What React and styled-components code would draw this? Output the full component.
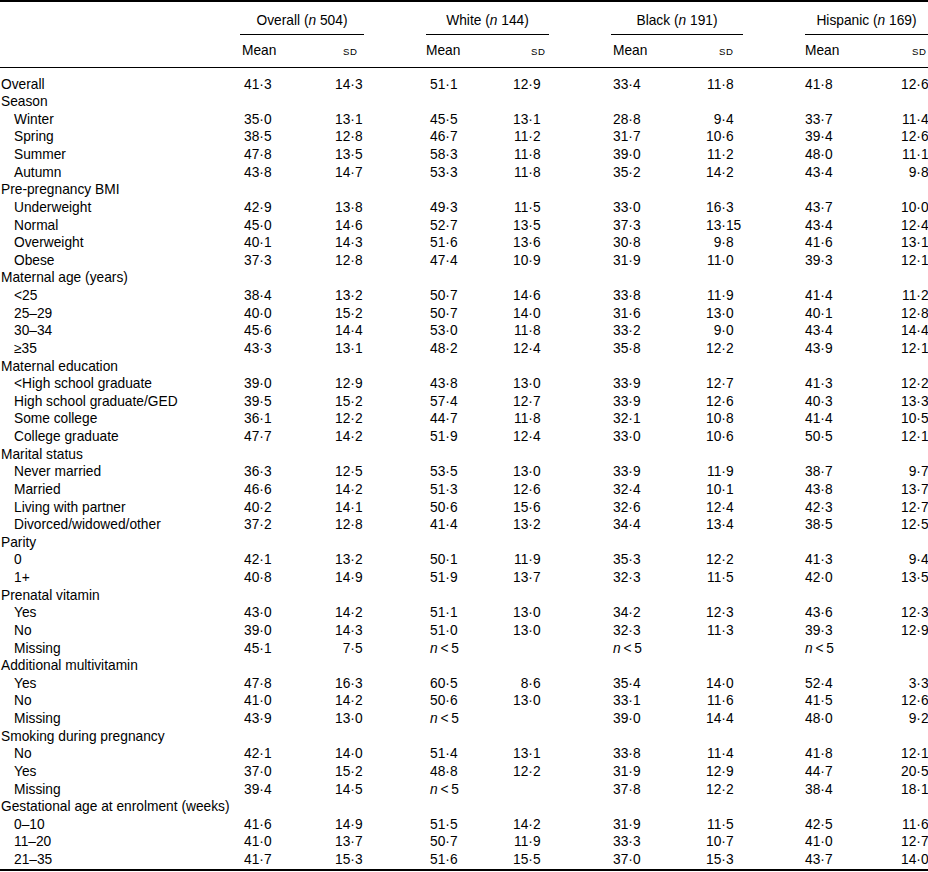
import React from "react";
import styled, { createGlobalStyle } from "styled-components";

const COLUMNS = "240px 60px 64px 62px 60px 63px 62px 60px 72px 62px 60px 63px";
const ROW_H = 17.64;

const groups = [
  { title: "Overall", n: 504, meanHead: 2, meanPad: 4, sdPad: 35, sdHead: 43 },
  { title: "White", n: 144, meanHead: 0, meanPad: 4, sdPad: 27, sdHead: 45 },
  { title: "Black", n: 191, meanHead: 2, meanPad: 2, sdPad: 35, sdHead: 48 },
  { title: "Hispanic", n: 169, meanHead: 0, meanPad: 0, sdPad: 36, sdHead: 47 }
];

// "x" = n < 5, null = empty cell
const sections = [
  { label: "Overall", values: ["41.3", "14.3", "51.1", "12.9", "33.4", "11.8", "41.8", "12.6"] },
  {
    label: "Season",
    rows: [
      ["Winter", "35.0", "13.1", "45.5", "13.1", "28.8", "9.4", "33.7", "11.4"],
      ["Spring", "38.5", "12.8", "46.7", "11.2", "31.7", "10.6", "39.4", "12.6"],
      ["Summer", "47.8", "13.5", "58.3", "11.8", "39.0", "11.2", "48.0", "11.1"],
      ["Autumn", "43.8", "14.7", "53.3", "11.8", "35.2", "14.2", "43.4", "9.8"]
    ]
  },
  {
    label: "Pre-pregnancy BMI",
    rows: [
      ["Underweight", "42.9", "13.8", "49.3", "11.5", "33.0", "16.3", "43.7", "10.0"],
      ["Normal", "45.0", "14.6", "52.7", "13.5", "37.3", "13.15", "43.4", "12.4"],
      ["Overweight", "40.1", "14.3", "51.6", "13.6", "30.8", "9.8", "41.6", "13.1"],
      ["Obese", "37.3", "12.8", "47.4", "10.9", "31.9", "11.0", "39.3", "12.1"]
    ]
  },
  {
    label: "Maternal age (years)",
    rows: [
      ["<25", "38.4", "13.2", "50.7", "14.6", "33.8", "11.9", "41.4", "11.2"],
      ["25–29", "40.0", "15.2", "50.7", "14.0", "31.6", "13.0", "40.1", "12.8"],
      ["30–34", "45.6", "14.4", "53.0", "11.8", "33.2", "9.0", "43.4", "14.4"],
      ["≥35", "43.3", "13.1", "48.2", "12.4", "35.8", "12.2", "43.9", "12.1"]
    ]
  },
  {
    label: "Maternal education",
    rows: [
      ["<High school graduate", "39.0", "12.9", "43.8", "13.0", "33.9", "12.7", "41.3", "12.2"],
      ["High school graduate/GED", "39.5", "15.2", "57.4", "12.7", "33.9", "12.6", "40.3", "13.3"],
      ["Some college", "36.1", "12.2", "44.7", "11.8", "32.1", "10.8", "41.4", "10.5"],
      ["College graduate", "47.7", "14.2", "51.9", "12.4", "33.0", "10.6", "50.5", "12.1"]
    ]
  },
  {
    label: "Marital status",
    rows: [
      ["Never married", "36.3", "12.5", "53.5", "13.0", "33.9", "11.9", "38.7", "9.7"],
      ["Married", "46.6", "14.2", "51.3", "12.6", "32.4", "10.1", "43.8", "13.7"],
      ["Living with partner", "40.2", "14.1", "50.6", "15.6", "32.6", "12.4", "42.3", "12.7"],
      ["Divorced/widowed/other", "37.2", "12.8", "41.4", "13.2", "34.4", "13.4", "38.5", "12.5"]
    ]
  },
  {
    label: "Parity",
    rows: [
      ["0", "42.1", "13.2", "50.1", "11.9", "35.3", "12.2", "41.3", "9.4"],
      ["1+", "40.8", "14.9", "51.9", "13.7", "32.3", "11.5", "42.0", "13.5"]
    ]
  },
  {
    label: "Prenatal vitamin",
    rows: [
      ["Yes", "43.0", "14.2", "51.1", "13.0", "34.2", "12.3", "43.6", "12.3"],
      ["No", "39.0", "14.3", "51.0", "13.0", "32.3", "11.3", "39.3", "12.9"],
      ["Missing", "45.1", "7.5", "x", null, "x", null, "x", null]
    ]
  },
  {
    label: "Additional multivitamin",
    rows: [
      ["Yes", "47.8", "16.3", "60.5", "8.6", "35.4", "14.0", "52.4", "3.3"],
      ["No", "41.0", "14.2", "50.6", "13.0", "33.1", "11.6", "41.5", "12.6"],
      ["Missing", "43.9", "13.0", "x", null, "39.0", "14.4", "48.0", "9.2"]
    ]
  },
  {
    label: "Smoking during pregnancy",
    rows: [
      ["No", "42.1", "14.0", "51.4", "13.1", "33.8", "11.4", "41.8", "12.1"],
      ["Yes", "37.0", "15.2", "48.8", "12.2", "31.9", "12.9", "44.7", "20.5"],
      ["Missing", "39.4", "14.5", "x", null, "37.8", "12.2", "38.4", "18.1"]
    ]
  },
  {
    label: "Gestational age at enrolment (weeks)",
    rows: [
      ["0–10", "41.6", "14.9", "51.5", "14.2", "31.9", "11.5", "42.5", "11.6"],
      ["11–20", "41.0", "13.7", "50.7", "11.9", "33.3", "10.7", "41.0", "12.7"],
      ["21–35", "41.7", "15.3", "51.6", "15.5", "37.0", "15.3", "43.7", "14.0"]
    ]
  }
];

const Num = ({ value }) => {
  if (value === null) return null;
  if (value === "x")
    return (
      <Small>
        <Italic>n</Italic>
        {"\u2009<\u20095"}
      </Small>
    );
  const [whole, frac] = value.split(".");
  return (
    <>
      <Int>{whole}</Int>·{frac}
    </>
  );
};

const DataRow = ({ label, indent, values }) => (
  <Row>
    <Label $indent={indent}>{label}</Label>
    {groups.map((g, i) => (
      <React.Fragment key={g.title}>
        {i > 0 && <Gap />}
        <NumCell $pad={g.meanPad}>
          {values && <Num value={values[i * 2]} />}
        </NumCell>
        <NumCell $pad={g.sdPad}>
          {values && <Num value={values[i * 2 + 1]} />}
        </NumCell>
      </React.Fragment>
    ))}
  </Row>
);

const App = () => {
  return (
    <>
      <GlobalStyle />
      <Table>
        <TitleRow>
          <Gap />
          {groups.map((g, i) => (
            <React.Fragment key={g.title}>
              {i > 0 && <Gap />}
              <GroupTitle>
                {g.title} (<Italic>n</Italic> {g.n})
              </GroupTitle>
            </React.Fragment>
          ))}
        </TitleRow>
        <SubHeadRow>
          <Gap />
          {groups.map((g, i) => (
            <React.Fragment key={g.title}>
              {i > 0 && <Gap />}
              <HeadCell $pad={g.meanHead}>Mean</HeadCell>
              <HeadCell $pad={g.sdHead}>
                <SmallCaps>sd</SmallCaps>
              </HeadCell>
            </React.Fragment>
          ))}
        </SubHeadRow>
        <Body>
          {sections.map(section => (
            <React.Fragment key={section.label}>
              <DataRow label={section.label} values={section.values} />
              {section.rows &&
                section.rows.map(([label, ...values]) => (
                  <DataRow
                    key={section.label + label}
                    label={label}
                    indent
                    values={values}
                  />
                ))}
            </React.Fragment>
          ))}
        </Body>
      </Table>
    </>
  );
};

const GlobalStyle = createGlobalStyle`
  html, body {
    margin: 0;
    padding: 0;
    background: #ffffff;
  }
  body {
    font-family: "Liberation Sans", Arial, Helvetica, sans-serif;
    font-size: 13.75px;
    color: #000000;
    overflow: hidden;
  }
`;

const Table = styled.div`
  width: 928px;
  border-top: 2px solid #000;
  border-bottom: 2px solid #000;
  line-height: ${ROW_H}px;
`;

const Grid = styled.div`
  display: grid;
  grid-template-columns: ${COLUMNS};
`;

const TitleRow = styled(Grid)`
  padding-top: 9.6px;
  align-items: end;
`;

const GroupTitle = styled.div`
  grid-column: span 2;
  text-align: center;
  padding-bottom: 4.7px;
  border-bottom: 1px solid #000;
  white-space: nowrap;
`;

const SubHeadRow = styled(Grid)`
  padding: 6.6px 0 6.8px;
  border-bottom: 1px solid #000;
`;

const HeadCell = styled.div`
  padding-left: ${p => p.$pad}px;
  white-space: nowrap;
`;

const SmallCaps = styled.span`
  font-size: 9.6px;
  text-transform: uppercase;
  letter-spacing: 0.6px;
`;

const Body = styled.div`
  padding: 7.6px 0 0.6px;
`;

const Row = styled(Grid)`
  height: ${ROW_H}px;
`;

const Label = styled.div`
  padding-left: ${p => (p.$indent ? 14 : 1)}px;
  white-space: nowrap;
`;

const NumCell = styled.div`
  padding-left: ${p => p.$pad}px;
  white-space: nowrap;
`;

const Int = styled.span`
  display: inline-block;
  min-width: 2ch;
  text-align: right;
`;

const Small = styled.span`
  white-space: nowrap;
`;

const Italic = styled.i`
  font-style: italic;
`;

const Gap = styled.div``;

export default App;
